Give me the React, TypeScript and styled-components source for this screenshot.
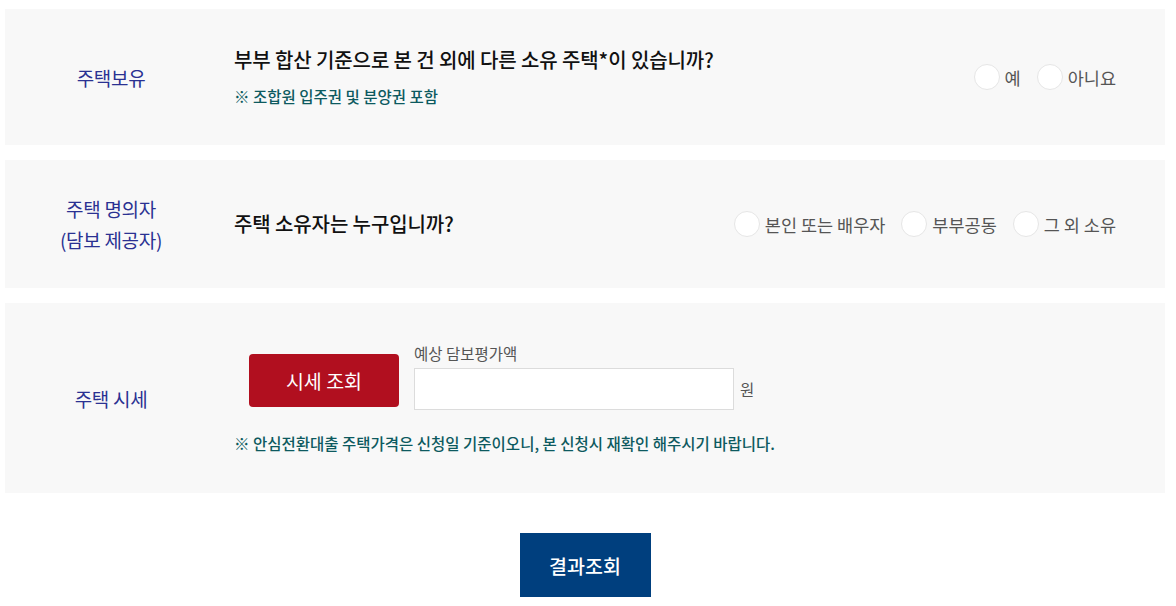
import { FC } from "react";
import styled, { createGlobalStyle } from "styled-components";

const GlobalStyle = createGlobalStyle`
  html, body {
    margin: 0;
    padding: 0;
    background: #fff;
    font-family: "Noto Sans CJK KR", "Noto Sans", sans-serif;
  }
`;

interface OptionProps {
  name: string;
  options: string[];
}

const RadioGroup: FC<OptionProps> = ({ name, options }) => (
  <Options>
    {options.map((label) => (
      <RadioLabel key={label}>
        <input type="radio" name={name} />
        <span className="mark" />
        <span>{label}</span>
      </RadioLabel>
    ))}
  </Options>
);

const App: FC = () => {
  return (
    <Page>
      <GlobalStyle />
      <Panel height={136}>
        <RowTitle>주택보유</RowTitle>
        <Body>
          <Question>
            <h3>부부 합산 기준으로 본 건 외에 다른 소유 주택*이 있습니까?</h3>
            <Note>※ 조합원 입주권 및 분양권 포함</Note>
          </Question>
          <RadioGroup name="own" options={["예", "아니요"]} />
        </Body>
      </Panel>

      <Panel height={128}>
        <RowTitle>
          주택 명의자
          <br />
          (담보 제공자)
        </RowTitle>
        <Body>
          <Question>
            <h3>주택 소유자는 누구입니까?</h3>
          </Question>
          <RadioGroup
            name="holder"
            options={["본인 또는 배우자", "부부공동", "그 외 소유"]}
          />
        </Body>
      </Panel>

      <Panel height={190}>
        <RowTitle>주택 시세</RowTitle>
        <PriceBody>
          <PriceRow>
            <RedButton type="button">시세 조회</RedButton>
            <Field>
              <label>예상 담보평가액</label>
              <div className="input-line">
                <input type="text" />
                <span>원</span>
              </div>
            </Field>
          </PriceRow>
          <Note>※ 안심전환대출 주택가격은 신청일 기준이오니, 본 신청시 재확인 해주시기 바랍니다.</Note>
        </PriceBody>
      </Panel>

      <Footer>
        <SubmitButton type="button">결과조회</SubmitButton>
      </Footer>
    </Page>
  );
};

export default App;

const Page = styled.div`
  width: 1160px;
  padding: 9px 11px 0 5px;
  display: flex;
  flex-direction: column;
  gap: 15px;
`;

const Panel = styled.section<{ height: number }>`
  display: flex;
  align-items: center;
  height: ${({ height }) => height}px;
  background: #f8f8f8;
`;

const RowTitle = styled.div`
  width: 212px;
  margin-right: 17px;
  flex-shrink: 0;
  text-align: center;
  color: #2a3192;
  font-size: 19px;
  font-weight: 400;
  line-height: 31px;
  letter-spacing: -0.3px;
`;

const Body = styled.div`
  flex: 1;
  display: flex;
  align-items: center;
  justify-content: space-between;
  padding-right: 49px;
`;

const Question = styled.div`
  display: flex;
  flex-direction: column;
  gap: 14px;
  h3 {
    margin: 0;
    font-size: 20px;
    font-weight: 500;
    color: #111;
    line-height: 24px;
    letter-spacing: -0.1px;
  }
`;

const Note = styled.p`
  margin: 0;
  font-size: 15.5px;
  font-weight: 500;
  color: #0d5a5f;
  line-height: 20px;
`;

const Options = styled.div`
  display: flex;
  align-items: center;
  gap: 16px;
`;

const RadioLabel = styled.label`
  display: flex;
  align-items: center;
  gap: 5px;
  font-size: 17.5px;
  color: #555;
  cursor: pointer;
  input {
    display: none;
  }
  .mark {
    width: 24px;
    height: 24px;
    border-radius: 50%;
    background: #fff;
    border: 1px solid #e6e6e6;
  }
`;

const PriceBody = styled.div`
  flex: 1;
  display: flex;
  flex-direction: column;
  gap: 23px;
`;

const PriceRow = styled.div`
  display: flex;
  align-items: flex-end;
  gap: 15px;
  padding-left: 15px;
`;

const RedButton = styled.button`
  width: 150px;
  height: 53px;
  margin-bottom: 3px;
  border: none;
  border-radius: 4px;
  background: #b10f1f;
  color: #fff;
  font-family: inherit;
  font-size: 19.5px;
  font-weight: 400;
  cursor: pointer;
`;

const Field = styled.div`
  display: flex;
  flex-direction: column;
  gap: 5px;
  label {
    font-size: 15.5px;
    color: #555;
    line-height: 20px;
  }
  .input-line {
    display: flex;
    align-items: center;
    gap: 6px;
    span {
      font-size: 15.5px;
      color: #555;
    }
  }
  input {
    box-sizing: border-box;
    width: 320px;
    height: 42px;
    border: 1px solid #dcdcdc;
    background: #fff;
    outline: none;
  }
`;

const Footer = styled.div`
  display: flex;
  justify-content: center;
  padding-top: 25px;
`;

const SubmitButton = styled.button`
  width: 131px;
  height: 64px;
  border: none;
  background: #003f7e;
  color: #fff;
  font-family: inherit;
  font-size: 19.5px;
  font-weight: 500;
  cursor: pointer;
`;
